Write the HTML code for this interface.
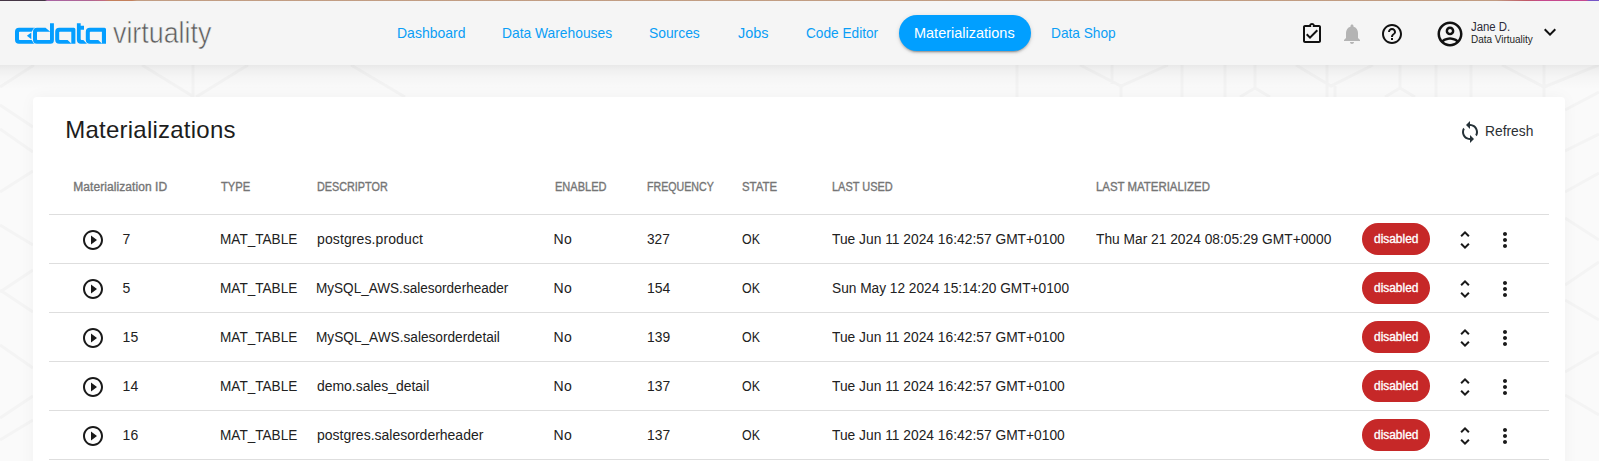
<!DOCTYPE html>
<html lang="en">
<head>
<meta charset="utf-8">
<title>Materializations</title>
<style>
*{box-sizing:border-box;margin:0;padding:0}
html,body{width:1599px;height:461px;overflow:hidden}
body{font-family:"Liberation Sans",sans-serif;background:#fafafa;position:relative;color:#212121}
a{text-decoration:none;color:inherit}
.abs,.t{position:absolute;white-space:nowrap}
.t{transform-origin:0 50%}
.t{line-height:20px}
#bgpat{position:absolute;left:0;top:0;width:1599px;height:461px}
header{position:absolute;left:0;top:0;width:1599px;height:65px;background:#f5f5f5;z-index:3}
#hshadow{position:absolute;left:0;top:65px;width:1599px;height:24px;z-index:3;background:linear-gradient(rgba(0,0,0,.07) 0,rgba(0,0,0,.045) 20%,rgba(0,0,0,.02) 50%,rgba(0,0,0,.006) 80%,rgba(0,0,0,0) 100%)}
#topline{position:absolute;left:0;top:0;width:1599px;height:1px;background:linear-gradient(90deg,#453545 0,#453545 45px,#a864a4 47px,#b06494 90px,#c26a80 104px,#c4805c 110px,#c4805c 132px,#c29e84 137px,#c19c82 1496px,#c07070 1515px,#c05866 1527px,#c6488e 1542px,#c6488e 1586px,#7656c6 1589px,#7656c6 1599px);z-index:5}
nav a{color:#0a9ef6;top:23.0px}
#pill{position:absolute;left:899px;top:15px;width:132px;height:36px;border-radius:18px;background:#019fff;box-shadow:0 3px 1px -2px rgba(0,0,0,.2),0 2px 2px 0 rgba(0,0,0,.14),0 1px 5px 0 rgba(0,0,0,.12)}
nav a.act{color:#fff}
.ico{position:absolute;width:24px;height:24px}
#card{position:absolute;left:33px;top:97px;width:1532px;height:420px;background:#fff;border-radius:4px;box-shadow:0 0 16px rgba(0,0,0,.04);z-index:1}
.hl{position:absolute;left:49px;width:1500px;height:1px;background:#dedede}
.th{color:#757575;font-weight:400;-webkit-text-stroke:0.35px #757575;top:177.1px}
.row{position:absolute;left:0;width:1599px;height:49px}
.row .t{top:14.9px}
.badge{position:absolute;left:1362px;top:9px;width:68px;height:32px;border-radius:16px;background:#c62828}
.badge .t{color:#fff;font-weight:400;-webkit-text-stroke:0.35px #fff;top:6.0px}
.row svg{position:absolute;width:24px;height:24px;top:14px}
</style>
</head>
<body>
<svg id="bgpat" viewBox="0 0 1599 461"><g fill="none" stroke="#f4f4f4" stroke-width="3">
<path d="M0 87L34 65M0 105L33 127M0 129L33 152M0 192L33 171M0 225L33 245M0 292L33 270M0 290L33 312M0 345L33 368M0 418L33 396M0 440L33 420"/>
<path d="M142 65L194 97M193 65V97M248 65L196 97M351 65L405 97M1017 65V97"/>
<path d="M1112 65V84M1080 65L1121 86L1168 65M1121 86V97M1182 65V97M1225 65V97M1255 65V88L1240 97M1255 88L1270 97M1296 65L1331 86L1373 65M1327 65V97M1335 86V97M1400 65V88L1385 97M1400 88L1415 97M1436 65V97M1471 65V97M1502 65L1544 87L1599 65M1544 65V97"/>
<path d="M1565 110L1599 92M1565 151L1599 134M1565 192L1599 173M1565 218L1599 240M1565 285L1599 262M1565 300L1599 320M1565 372L1599 352M1565 395L1599 415"/>
</g></svg>

<div id="topline"></div>
<header>
  <svg class="abs" style="left:0;top:0;width:230px;height:65px" viewBox="0 0 230 65">
    <g fill="#049eff" fill-rule="evenodd">
      <path d="M35.2 27.8H19Q15 27.8 15 31.8V39.8Q15 43.8 19 43.8H35.2L31.6 39.9H19.6Q19 39.9 19 39.3V32.3Q19 31.7 19.6 31.7H31.6Z"/>
      <path d="M26.9 35.8L31.3 32.4V39.2Z"/>
      <path stroke="#f5f5f5" stroke-width="1.1" paint-order="stroke" d="M50 23.3H53.9V40.3Q53.9 43.8 50.4 43.8H37Q33 43.8 33 39.8V31.8Q33 27.8 37 27.8H45.5L50 31.6ZM37.6 31.7H50V39.9H37.6Q37 39.9 37 39.3V32.3Q37 31.7 37.6 31.7Z"/>
      <path id="ga" d="M59.2 27.8H73.9Q75.4 27.8 75.4 29.3V43.8H59.2Q55.2 43.8 55.2 39.8V31.8Q55.2 27.8 59.2 27.8ZM59.8 31.7H71.3V43.4L67.6 39.9H59.8Q59.2 39.9 59.2 39.3V32.3Q59.2 31.7 59.8 31.7Z"/>
      <path d="M76.9 23.3H80.7V25.8H84V29.8H80.7V39Q80.7 39.9 81.6 39.9H83.3L87.2 43.8H80.9Q76.9 43.8 76.9 39.8Z"/>
      <path transform="translate(30.6 0)" stroke="#f5f5f5" stroke-width="1.1" paint-order="stroke" d="M59.2 27.8H73.9Q75.4 27.8 75.4 29.3V43.8H59.2Q55.2 43.8 55.2 39.8V31.8Q55.2 27.8 59.2 27.8ZM59.8 31.7H71.3V43.4L67.6 39.9H59.8Q59.2 39.9 59.2 39.3V32.3Q59.2 31.7 59.8 31.7Z"/>
    </g>
  </svg>
  <span class="t" id="logotxt" style="left:113.2px;font-size:29px;transform:scaleX(0.9246);top:13.0px;line-height:40px;color:#5e5e5e;-webkit-text-stroke:0.55px #f5f5f5">virtuality</span>

  <nav>
    <a class="t" style="left:397.37px;font-size:15px;transform:scaleX(0.9328);">Dashboard</a>
    <a class="t" style="left:502.08px;font-size:15px;transform:scaleX(0.9212);">Data Warehouses</a>
    <a class="t" style="left:649.2px;font-size:15px;transform:scaleX(0.9225);">Sources</a>
    <a class="t" style="left:737.5px;font-size:15px;transform:scaleX(0.962);">Jobs</a>
    <a class="t" style="left:805.9px;font-size:15px;transform:scaleX(0.9102);">Code Editor</a>
    <div id="pill"></div>
    <a class="t act" style="left:914.43px;font-size:15px;transform:scaleX(0.9658);">Materializations</a>
    <a class="t" style="left:1051.49px;font-size:15px;transform:scaleX(0.9117);">Data Shop</a>
  </nav>

  <!-- clipboard check -->
  <svg class="ico" style="left:1300px;top:22px" viewBox="0 0 24 24"><path fill="#111" d="M5 5v14h14V5H5zm7-4c1.300 0 2.400.84 2.820 2H19c1.100 0 2 .9 2 2v14c0 1.100-.9 2-2 2H5c-1.100 0-2-.9-2-2V5c0-1.100.9-2 2-2h4.180C9.600 1.840 10.700 1 12 1zm0 2c-.55 0-1 .45-1 1s.45 1 1 1 1-.45 1-1-.45-1-1-1zM10 17l-4-4 1.410-1.410L10 14.170l6.590-6.590L18 9l-8 8z" fill-rule="evenodd"/></svg>
  <!-- bell -->
  <svg class="ico" style="left:1340px;top:22px" viewBox="0 0 24 24"><path fill="#b4b4b4" d="M12 22c1.100 0 2-.9 2-2h-4c0 1.100.89 2 2 2zm6-6v-5c0-3.070-1.640-5.640-4.500-6.320V4c0-.83-.67-1.500-1.500-1.500s-1.500.67-1.500 1.500v.68C7.630 5.360 6 7.920 6 11v5l-2 2v1h16v-1l-2-2z"/></svg>
  <!-- help -->
  <svg class="ico" style="left:1380px;top:22px" viewBox="0 0 24 24"><path fill="#111" d="M11 18h2v-2h-2v2zm1-16C6.480 2 2 6.480 2 12s4.480 10 10 10 10-4.480 10-10S17.520 2 12 2zm0 18c-4.410 0-8-3.590-8-8s3.590-8 8-8 8 3.590 8 8-3.590 8-8 8zm0-14c-2.210 0-4 1.790-4 4h2c0-1.100.9-2 2-2s2 .9 2 2c0 2-3 1.750-3 5h2c0-2.250 3-2.500 3-5 0-2.210-1.790-4-4-4z"/></svg>
  <!-- account -->
  <svg class="ico" style="left:1435px;top:18.700px;width:30px;height:30px" viewBox="0 0 24 24"><path fill="#111" d="M12 2C6.480 2 2 6.480 2 12s4.480 10 10 10 10-4.480 10-10S17.520 2 12 2zM7.070 18.280c.43-.9 3.050-1.780 4.930-1.780s4.510.88 4.930 1.780C15.570 19.360 13.860 20 12 20s-3.570-.64-4.930-1.720zm11.290-1.450c-1.430-1.740-4.900-2.330-6.360-2.330s-4.930.59-6.360 2.330A7.950 7.950 0 0 1 4 12c0-4.410 3.590-8 8-8s8 3.590 8 8c0 1.820-.62 3.490-1.640 4.830zM12 6c-1.940 0-3.500 1.560-3.500 3.500S10.060 13 12 13s3.500-1.560 3.500-3.500S13.940 6 12 6zm0 5c-.83 0-1.500-.67-1.500-1.500S11.170 8 12 8s1.500.67 1.500 1.500S12.830 11 12 11z"/></svg>
  <span class="t" style="left:1470.5px;font-size:12px;transform:scaleX(0.9483);top:16.8px;color:#2b2b3a">Jane D.</span>
  <span class="t" style="left:1470.5px;font-size:10.5px;transform:scaleX(0.9481);top:29.1px;color:#1f1f1f">Data Virtuality</span>
  <svg class="ico" style="left:1538px;top:20px" viewBox="0 0 24 24"><path fill="#111" d="M16.590 8.590L12 13.170 7.410 8.590 6 10l6 6 6-6z"/></svg>
</header>

<div id="hshadow"></div>
<main id="card"></main>
<div style="position:absolute;left:0;top:0;z-index:2">
  <h1 class="t" style="left:65.25px;font-size:24px;letter-spacing:0.234px;top:113.7px;line-height:32px;font-weight:400;color:#1d1d1d">Materializations</h1>
  <svg class="ico" style="left:1457.700px;top:120px" viewBox="0 0 24 24"><path fill="#263238" d="M12 4V1L8 5l4 4V6c3.310 0 6 2.690 6 6 0 1.010-.25 1.970-.7 2.800l1.460 1.460C19.540 15.030 20 13.570 20 12c0-4.420-3.580-8-8-8zm0 14c-3.310 0-6-2.690-6-6 0-1.010.25-1.970.7-2.800L5.240 7.740C4.460 8.970 4 10.430 4 12c0 4.420 3.580 8 8 8v3l4-4-4-4v3z"/></svg>
  <span class="t" style="left:1484.91px;font-size:14px;transform:scaleX(0.9866);top:121.0px;color:#2b2f33">Refresh</span>

  <span class="t th" style="left:73.25px;font-size:12px;letter-spacing:0.071px;">Materialization ID</span>
  <span class="t th" style="left:220.75px;font-size:12px;transform:scaleX(0.9334);">TYPE</span>
  <span class="t th" style="left:317.0px;font-size:12px;transform:scaleX(0.9011);">DESCRIPTOR</span>
  <span class="t th" style="left:554.5px;font-size:12px;transform:scaleX(0.9183);">ENABLED</span>
  <span class="t th" style="left:647.0px;font-size:12px;transform:scaleX(0.886);">FREQUENCY</span>
  <span class="t th" style="left:741.5px;font-size:12px;transform:scaleX(0.9489);">STATE</span>
  <span class="t th" style="left:831.5px;font-size:12px;transform:scaleX(0.9139);">LAST USED</span>
  <span class="t th" style="left:1095.6px;font-size:12px;transform:scaleX(0.9523);">LAST MATERIALIZED</span>
  <div class="hl" style="top:214px"></div>
  <div class="row" style="top:214px"><svg style="left:81px" viewBox="0 0 24 24"><path fill="#1a1a1a" d="M10 16.500l6-4.500-6-4.500v9zM12 2C6.480 2 2 6.480 2 12s4.480 10 10 10 10-4.480 10-10S17.520 2 12 2zm0 18c-4.410 0-8-3.590-8-8s3.590-8 8-8 8 3.590 8 8-3.590 8-8 8z"/></svg><span class="t" style="left:122.5px;font-size:14px;">7</span><span class="t" style="left:219.78px;font-size:14px;transform:scaleX(0.971);">MAT_TABLE</span><span class="t" style="left:317.0px;font-size:14px;letter-spacing:0.107px;">postgres.product</span><span class="t" style="left:553.5px;font-size:14px;letter-spacing:0.39px;">No</span><span class="t" style="left:647.0px;font-size:14px;transform:scaleX(0.9757);">327</span><span class="t" style="left:741.5px;font-size:14px;transform:scaleX(0.8856);">OK</span><span class="t" style="left:832.0px;font-size:14px;transform:scaleX(0.9855);">Tue Jun 11 2024 16:42:57 GMT+0100</span><span class="t" style="left:1095.75px;font-size:14px;transform:scaleX(0.9832);">Thu Mar 21 2024 08:05:29 GMT+0000</span><div class="badge"><span class="t" style="left:11.75px;font-size:12px;letter-spacing:0px;transform:scaleX(0.9937)">disabled</span></div><svg style="left:1453px" viewBox="0 0 24 24"><path fill="#1a1a1a" d="M12 5.830L15.170 9l1.410-1.410L12 3 7.410 7.590 8.830 9 12 5.830zm0 12.340L8.830 15l-1.410 1.410L12 21l4.590-4.590L15.170 15 12 18.170z"/></svg><svg style="left:1493px" viewBox="0 0 24 24"><path fill="#1a1a1a" d="M12 8c1.100 0 2-.9 2-2s-.9-2-2-2-2 .9-2 2 .9 2 2 2zm0 2c-1.100 0-2 .9-2 2s.9 2 2 2 2-.9 2-2-.9-2-2-2zm0 6c-1.100 0-2 .9-2 2s.9 2 2 2 2-.9 2-2-.9-2-2-2z"/></svg><div class="hl" style="top:49px;left:49px"></div></div>
  <div class="row" style="top:263px"><svg style="left:81px" viewBox="0 0 24 24"><path fill="#1a1a1a" d="M10 16.500l6-4.500-6-4.500v9zM12 2C6.480 2 2 6.480 2 12s4.480 10 10 10 10-4.480 10-10S17.520 2 12 2zm0 18c-4.410 0-8-3.590-8-8s3.590-8 8-8 8 3.590 8 8-3.590 8-8 8z"/></svg><span class="t" style="left:122.5px;font-size:14px;">5</span><span class="t" style="left:219.78px;font-size:14px;transform:scaleX(0.971);">MAT_TABLE</span><span class="t" style="left:316.03px;font-size:14px;transform:scaleX(0.9683);">MySQL_AWS.salesorderheader</span><span class="t" style="left:553.5px;font-size:14px;letter-spacing:0.39px;">No</span><span class="t" style="left:646.5px;font-size:14px;transform:scaleX(0.9968);">154</span><span class="t" style="left:741.5px;font-size:14px;transform:scaleX(0.8856);">OK</span><span class="t" style="left:831.75px;font-size:14px;transform:scaleX(0.9777);">Sun May 12 2024 15:14:20 GMT+0100</span><div class="badge"><span class="t" style="left:11.75px;font-size:12px;letter-spacing:0px;transform:scaleX(0.9937)">disabled</span></div><svg style="left:1453px" viewBox="0 0 24 24"><path fill="#1a1a1a" d="M12 5.830L15.170 9l1.410-1.410L12 3 7.410 7.590 8.830 9 12 5.830zm0 12.340L8.830 15l-1.410 1.410L12 21l4.590-4.590L15.170 15 12 18.170z"/></svg><svg style="left:1493px" viewBox="0 0 24 24"><path fill="#1a1a1a" d="M12 8c1.100 0 2-.9 2-2s-.9-2-2-2-2 .9-2 2 .9 2 2 2zm0 2c-1.100 0-2 .9-2 2s.9 2 2 2 2-.9 2-2-.9-2-2-2zm0 6c-1.100 0-2 .9-2 2s.9 2 2 2 2-.9 2-2-.9-2-2-2z"/></svg><div class="hl" style="top:49px;left:49px"></div></div>
  <div class="row" style="top:312px"><svg style="left:81px" viewBox="0 0 24 24"><path fill="#1a1a1a" d="M10 16.500l6-4.500-6-4.500v9zM12 2C6.480 2 2 6.480 2 12s4.480 10 10 10 10-4.480 10-10S17.520 2 12 2zm0 18c-4.410 0-8-3.590-8-8s3.590-8 8-8 8 3.590 8 8-3.590 8-8 8z"/></svg><span class="t" style="left:122.5px;font-size:14px;letter-spacing:0.214px;">15</span><span class="t" style="left:219.78px;font-size:14px;transform:scaleX(0.971);">MAT_TABLE</span><span class="t" style="left:316.42px;font-size:14px;transform:scaleX(0.9752);">MySQL_AWS.salesorderdetail</span><span class="t" style="left:553.5px;font-size:14px;letter-spacing:0.39px;">No</span><span class="t" style="left:646.71px;font-size:14px;transform:scaleX(0.9879);">139</span><span class="t" style="left:741.5px;font-size:14px;transform:scaleX(0.8856);">OK</span><span class="t" style="left:832.0px;font-size:14px;transform:scaleX(0.9855);">Tue Jun 11 2024 16:42:57 GMT+0100</span><div class="badge"><span class="t" style="left:11.75px;font-size:12px;letter-spacing:0px;transform:scaleX(0.9937)">disabled</span></div><svg style="left:1453px" viewBox="0 0 24 24"><path fill="#1a1a1a" d="M12 5.830L15.170 9l1.410-1.410L12 3 7.410 7.590 8.830 9 12 5.830zm0 12.340L8.830 15l-1.410 1.410L12 21l4.590-4.590L15.170 15 12 18.170z"/></svg><svg style="left:1493px" viewBox="0 0 24 24"><path fill="#1a1a1a" d="M12 8c1.100 0 2-.9 2-2s-.9-2-2-2-2 .9-2 2 .9 2 2 2zm0 2c-1.100 0-2 .9-2 2s.9 2 2 2 2-.9 2-2-.9-2-2-2zm0 6c-1.100 0-2 .9-2 2s.9 2 2 2 2-.9 2-2-.9-2-2-2z"/></svg><div class="hl" style="top:49px;left:49px"></div></div>
  <div class="row" style="top:361px"><svg style="left:81px" viewBox="0 0 24 24"><path fill="#1a1a1a" d="M10 16.500l6-4.500-6-4.500v9zM12 2C6.480 2 2 6.480 2 12s4.480 10 10 10 10-4.480 10-10S17.520 2 12 2zm0 18c-4.410 0-8-3.590-8-8s3.590-8 8-8 8 3.590 8 8-3.590 8-8 8z"/></svg><span class="t" style="left:122.5px;font-size:14px;letter-spacing:0.214px;">14</span><span class="t" style="left:219.78px;font-size:14px;transform:scaleX(0.971);">MAT_TABLE</span><span class="t" style="left:317.0px;font-size:14px;transform:scaleX(0.9952);">demo.sales_detail</span><span class="t" style="left:553.5px;font-size:14px;letter-spacing:0.39px;">No</span><span class="t" style="left:646.71px;font-size:14px;transform:scaleX(0.9879);">137</span><span class="t" style="left:741.5px;font-size:14px;transform:scaleX(0.8856);">OK</span><span class="t" style="left:832.0px;font-size:14px;transform:scaleX(0.9855);">Tue Jun 11 2024 16:42:57 GMT+0100</span><div class="badge"><span class="t" style="left:11.75px;font-size:12px;letter-spacing:0px;transform:scaleX(0.9937)">disabled</span></div><svg style="left:1453px" viewBox="0 0 24 24"><path fill="#1a1a1a" d="M12 5.830L15.170 9l1.410-1.410L12 3 7.410 7.590 8.830 9 12 5.830zm0 12.340L8.830 15l-1.410 1.410L12 21l4.590-4.590L15.170 15 12 18.170z"/></svg><svg style="left:1493px" viewBox="0 0 24 24"><path fill="#1a1a1a" d="M12 8c1.100 0 2-.9 2-2s-.9-2-2-2-2 .9-2 2 .9 2 2 2zm0 2c-1.100 0-2 .9-2 2s.9 2 2 2 2-.9 2-2-.9-2-2-2zm0 6c-1.100 0-2 .9-2 2s.9 2 2 2 2-.9 2-2-.9-2-2-2z"/></svg><div class="hl" style="top:49px;left:49px"></div></div>
  <div class="row" style="top:410px"><svg style="left:81px" viewBox="0 0 24 24"><path fill="#1a1a1a" d="M10 16.500l6-4.500-6-4.500v9zM12 2C6.480 2 2 6.480 2 12s4.480 10 10 10 10-4.480 10-10S17.520 2 12 2zm0 18c-4.410 0-8-3.590-8-8s3.590-8 8-8 8 3.590 8 8-3.590 8-8 8z"/></svg><span class="t" style="left:122.5px;font-size:14px;letter-spacing:0.214px;">16</span><span class="t" style="left:219.78px;font-size:14px;transform:scaleX(0.971);">MAT_TABLE</span><span class="t" style="left:317.0px;font-size:14px;transform:scaleX(0.9989);">postgres.salesorderheader</span><span class="t" style="left:553.5px;font-size:14px;letter-spacing:0.39px;">No</span><span class="t" style="left:646.71px;font-size:14px;transform:scaleX(0.9879);">137</span><span class="t" style="left:741.5px;font-size:14px;transform:scaleX(0.8856);">OK</span><span class="t" style="left:832.0px;font-size:14px;transform:scaleX(0.9855);">Tue Jun 11 2024 16:42:57 GMT+0100</span><div class="badge"><span class="t" style="left:11.75px;font-size:12px;letter-spacing:0px;transform:scaleX(0.9937)">disabled</span></div><svg style="left:1453px" viewBox="0 0 24 24"><path fill="#1a1a1a" d="M12 5.830L15.170 9l1.410-1.410L12 3 7.410 7.590 8.830 9 12 5.830zm0 12.340L8.830 15l-1.410 1.410L12 21l4.590-4.590L15.170 15 12 18.170z"/></svg><svg style="left:1493px" viewBox="0 0 24 24"><path fill="#1a1a1a" d="M12 8c1.100 0 2-.9 2-2s-.9-2-2-2-2 .9-2 2 .9 2 2 2zm0 2c-1.100 0-2 .9-2 2s.9 2 2 2 2-.9 2-2-.9-2-2-2zm0 6c-1.100 0-2 .9-2 2s.9 2 2 2 2-.9 2-2-.9-2-2-2z"/></svg><div class="hl" style="top:49px;left:49px"></div></div>
</div>
</body>
</html>
